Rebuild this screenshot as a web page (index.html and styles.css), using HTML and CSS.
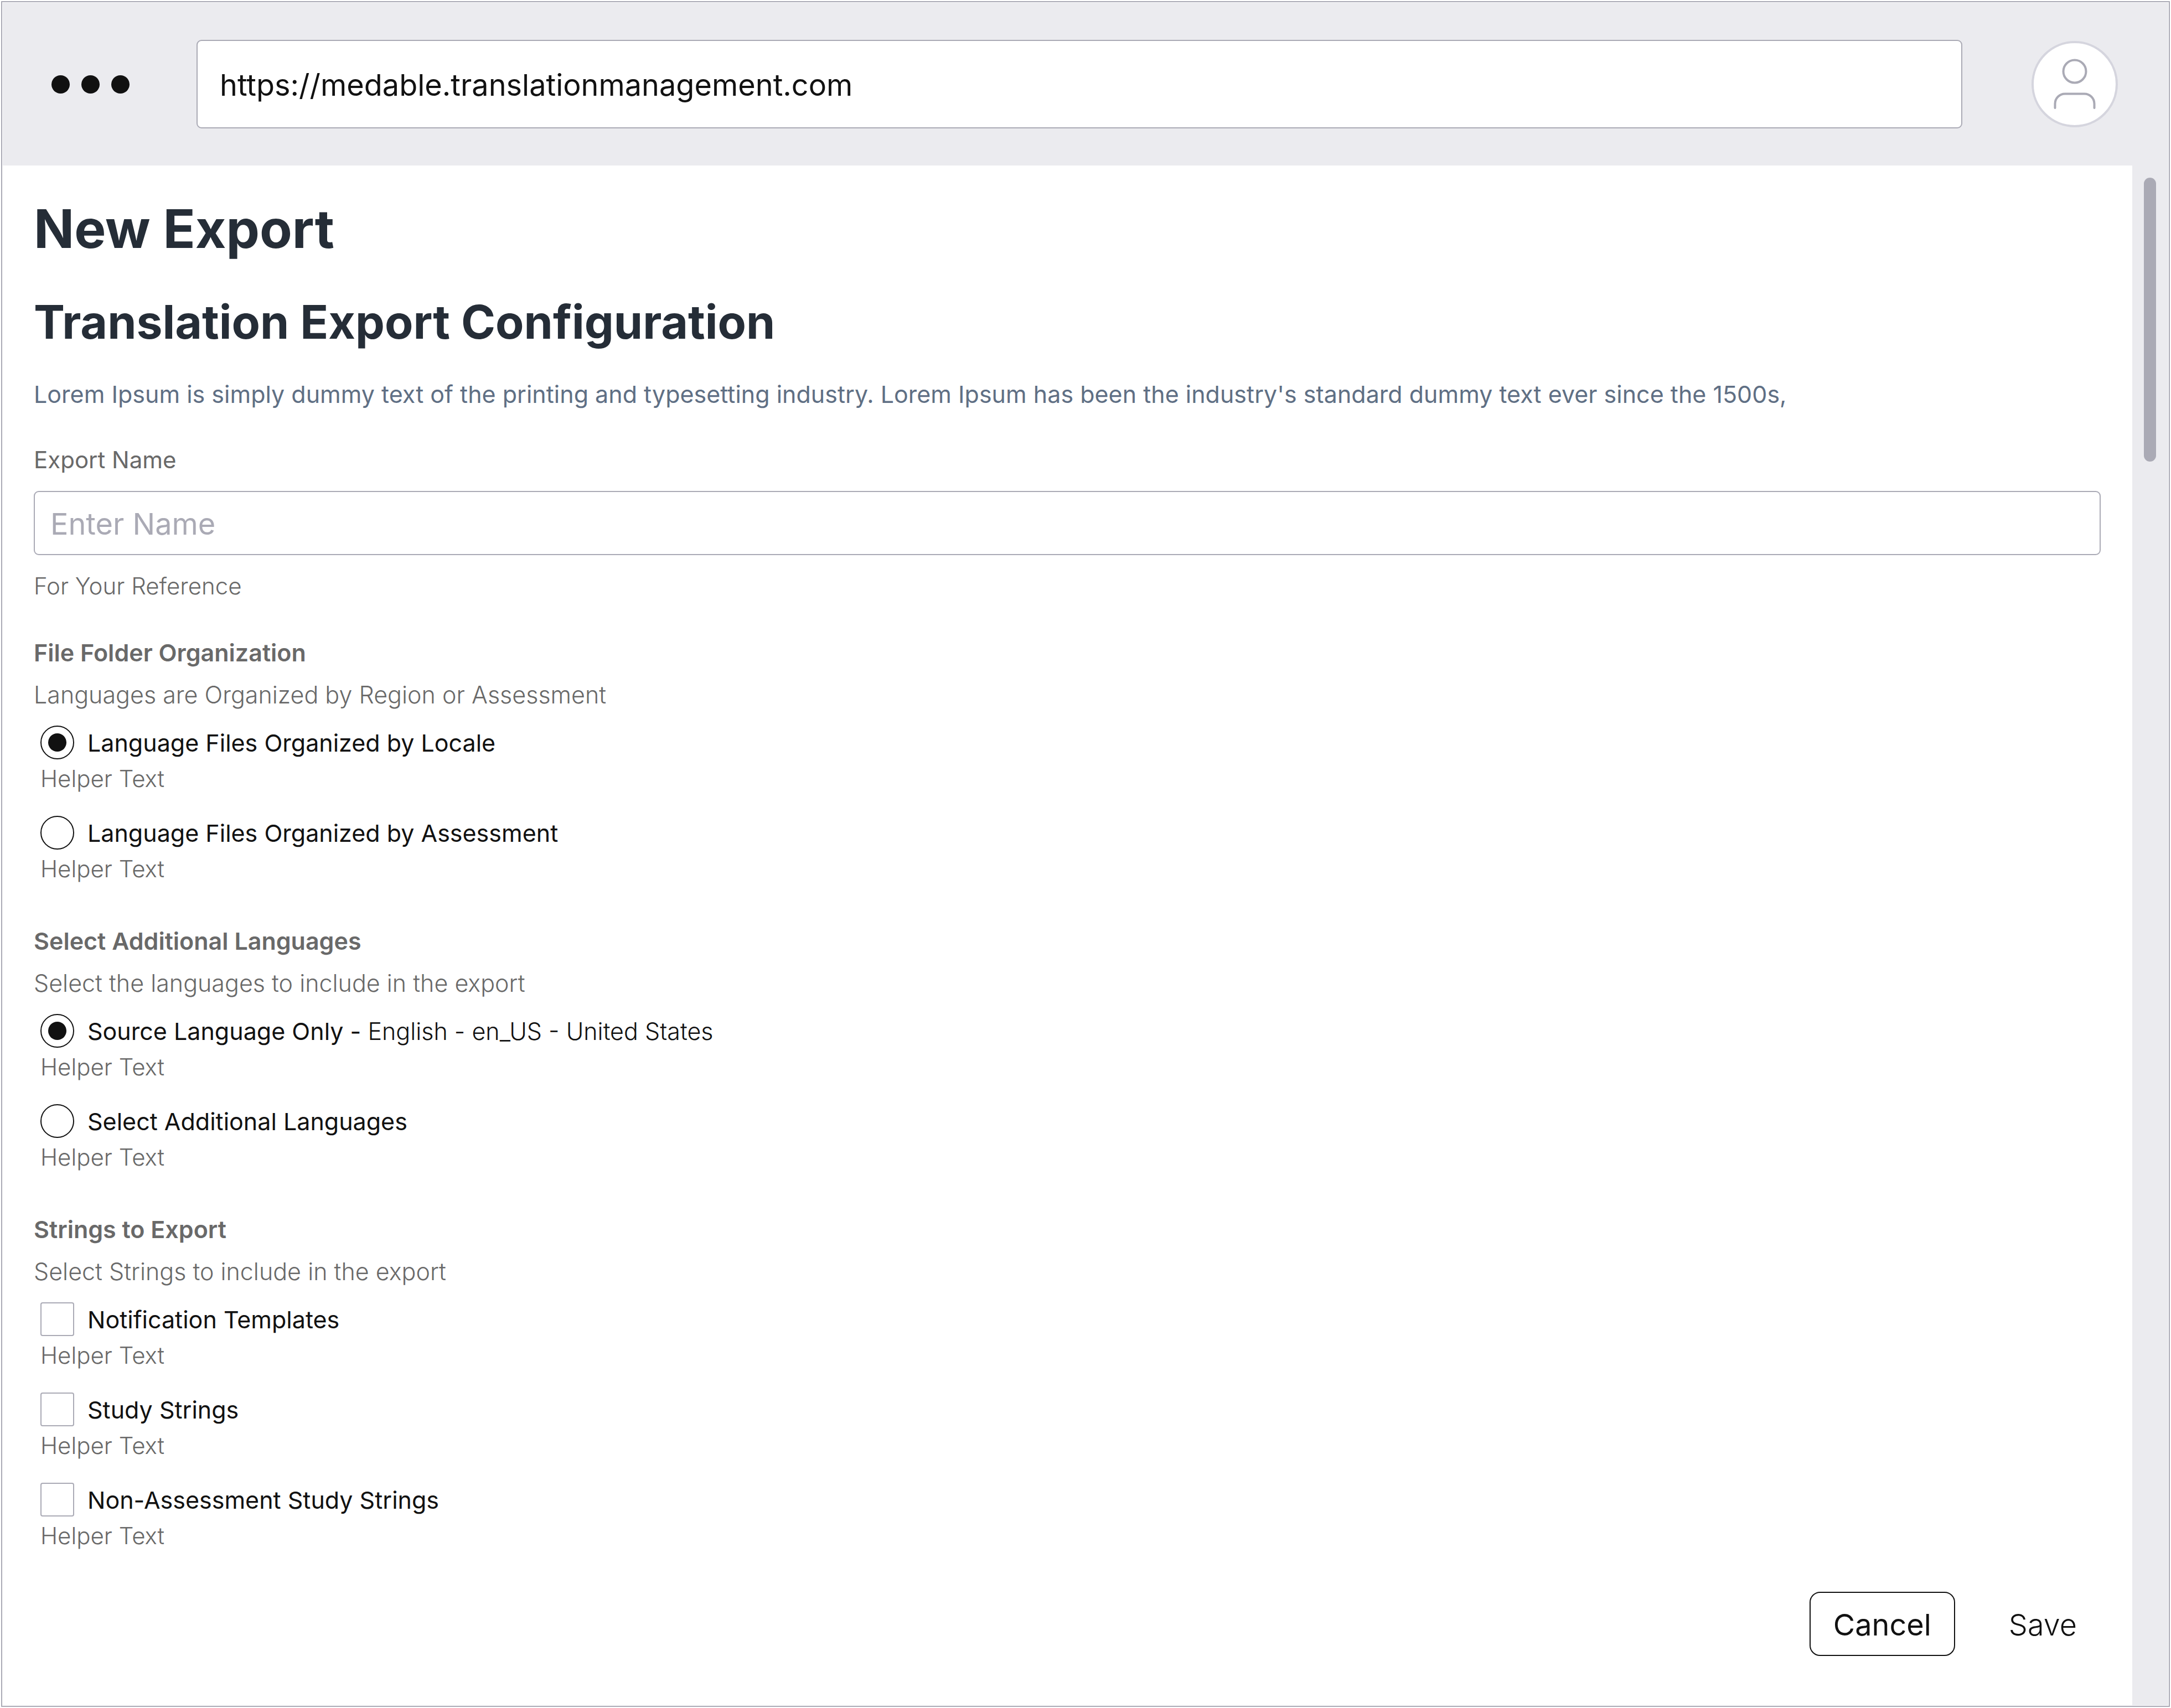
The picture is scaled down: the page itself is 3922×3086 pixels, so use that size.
FILE: index.html
```html
<!DOCTYPE html>
<html lang="en">
<head>
<meta charset="utf-8">
<meta name="viewport" content="width=device-width, initial-scale=1">
<title>New Export</title>
<link rel="stylesheet" href="styles.css">
</head>
<body>
<div class="window">
  <header class="browser-bar">
    <div class="dots" aria-hidden="true"><span class="dot"></span><span class="dot"></span><span class="dot"></span></div>
    <input class="url" type="text" aria-label="Address" value="https://medable.translationmanagement.com">
    <svg class="avatar" viewBox="0 0 156 156" role="img" aria-label="Account">
      <circle cx="78" cy="78" r="76" fill="#fff" stroke="#d5d5de" stroke-width="4"/>
      <g fill="none" stroke="#aaaab5" stroke-width="4" stroke-linecap="round">
        <circle cx="78" cy="55" r="20.5"/>
        <path d="M42.500 121v-7.500a18 18 0 0 1 18-18h35a18 18 0 0 1 18 18v7.500"/>
      </g>
    </svg>
  </header>
  <div class="viewport">
    <main class="page">
      <h1 class="title">New Export</h1>
      <h2 class="subtitle">Translation Export Configuration</h2>
      <p class="intro">Lorem Ipsum is simply dummy text of the printing and typesetting industry. Lorem Ipsum has been the industry's standard dummy text ever since the 1500s,</p>
      <form class="form">
        <div class="field">
          <label class="field-label" for="export-name">Export Name</label>
          <input class="field-input" id="export-name" type="text" placeholder="Enter Name" aria-describedby="export-name-hint">
          <p class="field-hint" id="export-name-hint">For Your Reference</p>
        </div>

        <fieldset class="group">
          <legend class="group-title">File Folder Organization</legend>
          <p class="group-text">Languages are Organized by Region or Assessment</p>
          <div class="options">
            <div class="option">
              <label class="choice"><input class="control radio" type="radio" name="folders" checked><span>Language Files Organized by Locale</span></label>
              <p class="helper">Helper Text</p>
            </div>
            <div class="option">
              <label class="choice"><input class="control radio" type="radio" name="folders"><span>Language Files Organized by Assessment</span></label>
              <p class="helper">Helper Text</p>
            </div>
          </div>
        </fieldset>

        <fieldset class="group">
          <legend class="group-title">Select Additional Languages</legend>
          <p class="group-text">Select the languages to include in the export</p>
          <div class="options">
            <div class="option">
              <label class="choice"><input class="control radio" type="radio" name="languages" checked><span>Source Language Only - <span class="choice-detail">English - en_US - United States</span></span></label>
              <p class="helper">Helper Text</p>
            </div>
            <div class="option">
              <label class="choice"><input class="control radio" type="radio" name="languages"><span>Select Additional Languages</span></label>
              <p class="helper">Helper Text</p>
            </div>
          </div>
        </fieldset>

        <fieldset class="group">
          <legend class="group-title">Strings to Export</legend>
          <p class="group-text">Select Strings to include in the export</p>
          <div class="options">
            <div class="option">
              <label class="choice"><input class="control checkbox" type="checkbox"><span>Notification Templates</span></label>
              <p class="helper">Helper Text</p>
            </div>
            <div class="option">
              <label class="choice"><input class="control checkbox" type="checkbox"><span>Study Strings</span></label>
              <p class="helper">Helper Text</p>
            </div>
            <div class="option">
              <label class="choice"><input class="control checkbox" type="checkbox"><span>Non-Assessment Study Strings</span></label>
              <p class="helper">Helper Text</p>
            </div>
          </div>
        </fieldset>

        <div class="actions">
          <button class="button button-outline" type="button">Cancel</button>
          <button class="button" type="submit">Save</button>
        </div>
      </form>
    </main>
    <div class="scroll-track" aria-hidden="true"><div class="scroll-thumb"></div></div>
  </div>
</div>
</body>
</html>
```

FILE: styles.css
```css
:root {
  --ink: #111111;
  --heading: #252d37;
  --slate: #5f6f84;
  --grey: #696969;
  --line: #aaaab5;
  --chrome: #ebebef;
}

*, *::before, *::after { box-sizing: border-box; }

body {
  margin: 0;
  padding: 2px;
  min-height: 100vh;
  display: flex;
  background: #fff;
  color: var(--ink);
  font-family: Inter, "Liberation Sans", sans-serif;
  font-size: 43px;
  line-height: 52px;
}

h1, h2, p, fieldset, legend { margin: 0; padding: 0; }

input, button { font: inherit; color: inherit; }

.window {
  flex: 1;
  min-width: 0;
  display: flex;
  flex-direction: column;
  padding: 1px;
  border: 2px solid var(--line);
}

.browser-bar {
  display: flex;
  align-items: center;
  padding: 67px 91px 67px 88px;
  background: var(--chrome);
}

.dots { display: flex; gap: 21px; }

.dot {
  width: 33px;
  height: 33px;
  border-radius: 50%;
  background: var(--ink);
}

.url {
  flex: 1;
  min-width: 0;
  height: 160px;
  margin: 0 125px 0 121px;
  padding: 3px 40px 0;
  border: 2px solid var(--line);
  border-radius: 9px;
  background: #fff;
  font-size: 54px;
}

.avatar { width: 156px; height: 156px; flex: none; }

.viewport { flex: 1; display: flex; }

.page { flex: 1; min-width: 0; padding: 56px 57px 88px 56px; }

.title {
  color: var(--heading);
  font-size: 96px;
  line-height: 116px;
  font-weight: 700;
}

.subtitle {
  margin-top: 59px;
  color: var(--heading);
  font-size: 84px;
  line-height: 104px;
  font-weight: 700;
}

.intro { margin-top: 52px; color: var(--slate); }

.field {
  display: flex;
  flex-direction: column;
  gap: 30px;
  margin-top: 67px;
  color: var(--grey);
  font-size: 42px;
}

.field-input {
  width: 100%;
  height: 116px;
  padding: 3px 28px 0;
  border: 2px solid var(--line);
  border-radius: 9px;
  background: #fff;
  color: var(--ink);
  font-size: 54px;
}

.field-input::placeholder { color: var(--line); opacity: 1; }

.field-hint { font-weight: 300; }

.group { min-width: 0; margin-top: 78px; border: 0; }

.field + .group { margin-top: 68px; }

.group-title { color: var(--grey); font-weight: 600; }

.group-text { margin-top: 24px; color: var(--grey); font-weight: 300; }

.options {
  display: flex;
  flex-direction: column;
  gap: 41px;
  margin: 30px 0 0 12px;
}

.choice {
  display: flex;
  align-items: center;
  gap: 24px;
  width: fit-content;
}

.choice-detail { font-weight: 300; }

.helper { margin-top: 9px; color: var(--grey); font-size: 42px; font-weight: 300; }

.control {
  appearance: none;
  flex: none;
  width: 61px;
  height: 61px;
  margin: 0;
  background: #fff;
}

.radio {
  display: grid;
  place-items: center;
  border: 2px solid var(--ink);
  border-radius: 50%;
}

.radio:checked::before {
  content: "";
  width: 33px;
  height: 33px;
  border-radius: 50%;
  background: var(--ink);
}

.checkbox { border: 2px solid var(--line); border-radius: 4px; }

.checkbox:checked { background: var(--ink); }

.actions {
  display: flex;
  justify-content: flex-end;
  gap: 54px;
  margin-top: 75px;
}

.button {
  height: 116px;
  padding: 3px 41px 0;
  border: 2px solid transparent;
  border-radius: 19px;
  background: none;
  font-size: 54px;
  font-weight: 300;
}

.button-outline { border-color: var(--ink); font-weight: 400; }

.scroll-track {
  width: 65px;
  padding: 22px 22px 0 21px;
  background: var(--chrome);
}

.scroll-thumb { height: 513px; border-radius: 11px; background: var(--line); }
```
